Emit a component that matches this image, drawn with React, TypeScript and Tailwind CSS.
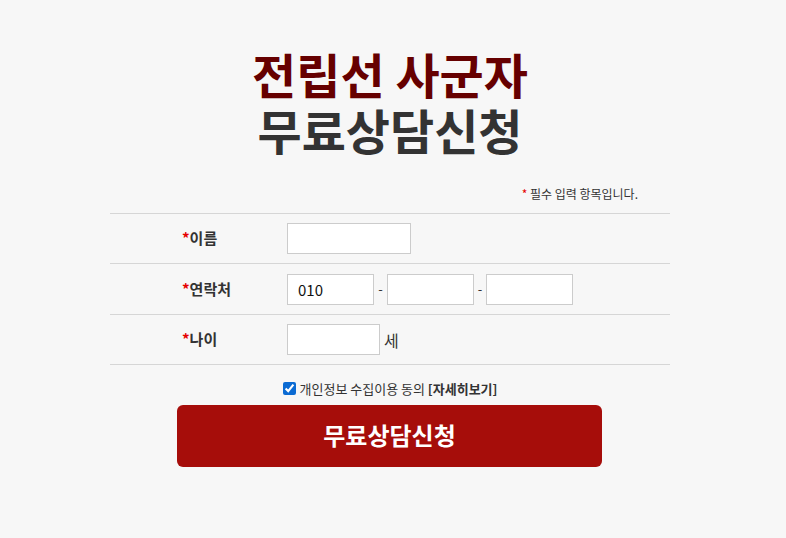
import { useState } from "react";

const font = { fontFamily: '"Noto Sans CJK KR", "Noto Sans", sans-serif' };

const Label = ({ text }: { text: string }) => (
  <div className="w-[180px] shrink-0 pl-[72px] text-[15px] font-bold text-[#333]">
    <span className="text-[#e60000]">*</span>
    {text}
  </div>
);

const inputCls =
  "h-[31px] border border-[#cccccc] bg-white px-[10px] text-[15px] text-[#111] outline-none";

const App = () => {
  const [agree, setAgree] = useState(true);
  const [phone, setPhone] = useState("010");

  return (
    <div className="min-h-[538px] w-full bg-[#f7f7f7] pt-[45px]" style={font}>
      <div className="ml-[110px] w-[560px]">
        <h1 className="text-center text-[48px] leading-[56px] font-bold">
          <span className="block text-[#660000]">전립선 사군자</span>
          <span className="block text-[#333333]">무료상담신청</span>
        </h1>

        <p className="mt-[28px] pr-[32px] text-right text-[12px] leading-[18px] text-[#333]">
          <span className="text-[#e60000]">*</span> 필수 입력 항목입니다.
        </p>

        <div className="mt-[10px] border-t border-[#d6d6d6]">
          <div className="flex h-[50px] items-center border-b border-[#d6d6d6]">
            <Label text="이름" />
            <input className={`${inputCls} ml-[-3px] w-[124px]`} />
          </div>
          <div className="flex h-[51px] items-center border-b border-[#d6d6d6]">
            <Label text="연락처" />
            <input
              className={`${inputCls} ml-[-3px] w-[87px]`}
              value={phone}
              onChange={(e) => setPhone(e.target.value)}
            />
            <span className="w-[13px] text-center text-[13px] text-[#333]">-</span>
            <input className={`${inputCls} w-[87px]`} />
            <span className="w-[12px] text-center text-[13px] text-[#333]">-</span>
            <input className={`${inputCls} w-[87px]`} />
          </div>
          <div className="flex h-[50px] items-center border-b border-[#d6d6d6]">
            <Label text="나이" />
            <input className={`${inputCls} ml-[-3px] w-[93px]`} />
            <span className="ml-[4px] text-[16px] text-[#333]">세</span>
          </div>
        </div>

        <label className="mt-[14px] flex items-center justify-center gap-[4px] text-[13px] text-[#333]">
          <input
            type="checkbox"
            checked={agree}
            onChange={() => setAgree(!agree)}
            className="h-[13px] w-[13px] accent-[#0b6bd3]"
          />
          <span>
            개인정보 수집이용 동의 <b className="font-bold">[자세히보기]</b>
          </span>
        </label>

        <button className="mt-[6px] ml-[67px] flex h-[62px] w-[425px] items-center justify-center rounded-[6px] bg-[#a60d0a] pb-[2px] text-[24px] font-bold text-white">
          무료상담신청
        </button>
      </div>
    </div>
  );
};

export default App;
